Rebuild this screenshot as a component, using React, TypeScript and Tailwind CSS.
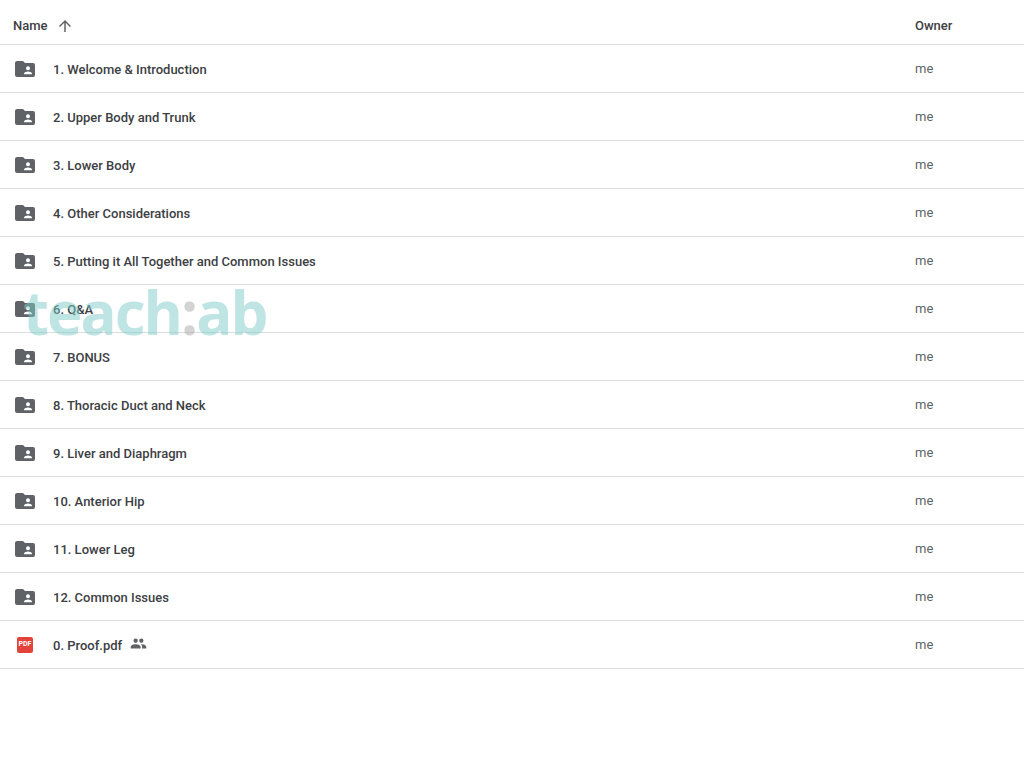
import React from "react";

const folders = [
  "1. Welcome & Introduction",
  "2. Upper Body and Trunk",
  "3. Lower Body",
  "4. Other Considerations",
  "5. Putting it All Together and Common Issues",
  "6. Q&A",
  "7. BONUS",
  "8. Thoracic Duct and Neck",
  "9. Liver and Diaphragm",
  "10. Anterior Hip",
  "11. Lower Leg",
  "12. Common Issues",
];

const SharedFolderIcon = () => (
  <svg width="20" height="16" viewBox="0 0 20 16" className="block">
    <path
      fill="#5f6368"
      fillRule="evenodd"
      d="M2 0h6l2 2h8a2 2 0 0 1 2 2v10a2 2 0 0 1-2 2H2a2 2 0 0 1-2-2V2a2 2 0 0 1 2-2zm11 5.2a2 2 0 1 0 0 4 2 2 0 0 0 0-4zm0 5.2c-1.7 0-4 .8-4 2.1v.7h8v-.7c0-1.3-2.3-2.1-4-2.1z"
    />
  </svg>
);

const PdfIcon = () => (
  <div className="w-4 h-4 rounded-[2px] bg-[#e2443c] flex items-center justify-center text-white text-[7px] font-bold leading-none">
    PDF
  </div>
);

const PeopleIcon = () => (
  <svg width="17" height="17" viewBox="0 0 24 24" className="block mb-[3px]">
    <path
      fill="#5f6368"
      d="M16 11c1.66 0 2.99-1.34 2.99-3S17.66 5 16 5s-3 1.34-3 3 1.34 3 3 3zm-8 0c1.66 0 2.99-1.34 2.99-3S9.66 5 8 5 5 6.34 5 8s1.34 3 3 3zm0 2c-2.33 0-7 1.17-7 3.5V19h14v-2.5C15 14.17 10.33 13 8 13zm8 0c-.29 0-.62.02-.97.05 1.16.84 1.97 1.97 1.97 3.45V19h6v-2.5c0-2.33-4.67-3.5-7-3.5z"
    />
  </svg>
);

const Row = ({ icon, name, shared }: { icon: React.ReactNode; name: string; shared?: boolean }) => (
  <div className="h-12 flex items-center border-b border-[#dadce0]">
    <div className="w-[53px] pl-[15px] shrink-0">{icon}</div>
    <div className="flex-1 flex items-center gap-2 text-[13px] font-medium text-[#3c4043]">
      <span className="pt-[2px]">{name}</span>
      {shared && <PeopleIcon />}
    </div>
    <div className="w-[109px] shrink-0 text-[13px] text-[#5f6368]">me</div>
  </div>
);

export default function App() {
  return (
    <div
      className="relative w-[1024px] h-[768px] overflow-hidden bg-white"
      style={{ fontFamily: "Roboto, 'Liberation Sans', sans-serif" }}
    >
      <div className="h-[45px] flex items-center pt-[7px] border-b border-[#dadce0] text-[13px] font-medium text-[#3c4043]">
        <div className="flex-1 flex items-center pl-[13px]">
          <span>Name</span>
          <svg width="18" height="18" viewBox="0 0 24 24" className="ml-2">
            <path fill="#5f6368" d="M4 12l1.41 1.41L11 7.83V20h2V7.83l5.58 5.59L20 12l-8-8-8 8z" />
          </svg>
        </div>
        <div className="w-[109px] shrink-0">Owner</div>
      </div>
      {folders.map((name) => (
        <Row key={name} icon={<SharedFolderIcon />} name={name} />
      ))}
      <Row icon={<div className="pl-[2px]"><PdfIcon /></div>} name="0. Proof.pdf" shared />

      {/* watermark */}
      <div
        className="absolute left-[23px] top-[272px] text-[60px] leading-[80px] font-bold tracking-[-2px] text-[#7fcdc8] opacity-50 pointer-events-none"
        style={{ fontFamily: "'Open Sans', sans-serif" }}
      >
        teach<span className="text-[#a9a9a9]">:</span>ab
      </div>
    </div>
  );
}
